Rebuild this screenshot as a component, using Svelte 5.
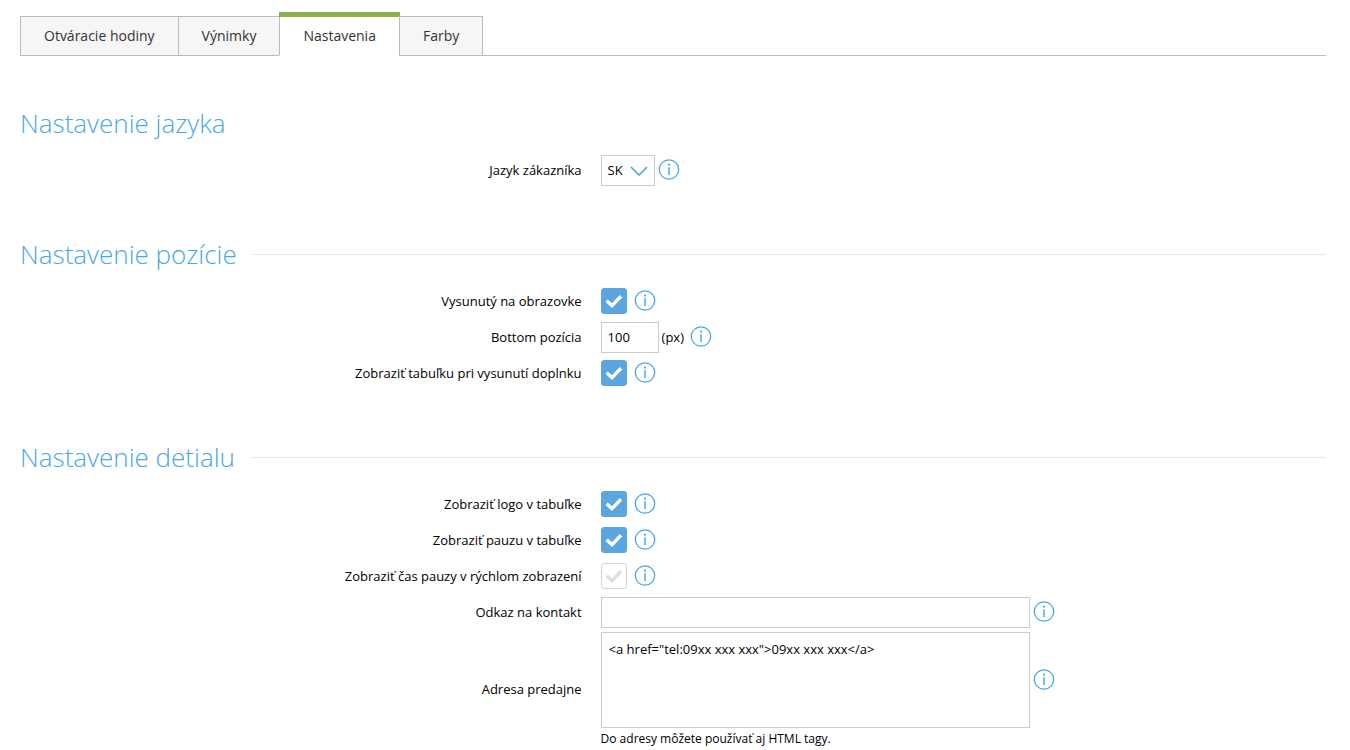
<script>
  let tabs = ["Otváracie hodiny", "Výnimky", "Nastavenia", "Farby"];
  let activeTab = "Nastavenia";

  let language = "SK";
  let bottom = "100";
  let contact = "";
  let address = '<a href="tel:09xx xxx xxx">09xx xxx xxx</a>';

  let position = {
    opened: true,
    showTable: true,
  };

  let detail = [
    { id: "logo", label: "Zobraziť logo v tabuľke", checked: true },
    { id: "pause", label: "Zobraziť pauzu v tabuľke", checked: true },
    {
      id: "pause-time",
      label: "Zobraziť čas pauzy v rýchlom zobrazení",
      checked: false,
    },
  ];
</script>

{#snippet info()}
  <button type="button" class="info" aria-label="Info">
    <svg viewBox="0 0 22 22" width="22" height="22" fill="none">
      <circle cx="11" cy="10.5" r="9.7" stroke="currentColor" stroke-width="1.3" />
      <circle cx="11" cy="5.7" r="1.1" fill="currentColor" />
      <path d="M11 8.3V15.9" stroke="currentColor" stroke-width="1.5" />
    </svg>
  </button>
{/snippet}

{#snippet tick()}
  <svg class="tick" viewBox="0 0 26 26" width="26" height="26" fill="none">
    <path d="M5.6 12.8L11 17.6L20 8.2" stroke="currentColor" stroke-width="3.4" />
  </svg>
{/snippet}

<nav class="tabs">
  {#each tabs as tab}
    <button
      type="button"
      class="tab"
      class:active={tab === activeTab}
      onclick={() => (activeTab = tab)}>{tab}</button
    >
  {/each}
</nav>

<form>
  <section>
    <h2>Nastavenie jazyka</h2>
    <div class="row">
      <label for="language">Jazyk zákazníka</label>
      <div class="field">
        <div class="select">
          <select id="language" bind:value={language}>
            <option>SK</option>
            <option>CZ</option>
            <option>EN</option>
          </select>
          <svg viewBox="0 0 18 10" width="18" height="10" fill="none">
            <path d="M1 1L9 9L17 1" stroke="currentColor" stroke-width="1.5" />
          </svg>
        </div>
        {@render info()}
      </div>
    </div>
  </section>

  <section>
    <h2 class="line">Nastavenie pozície</h2>
    <div class="row">
      <label for="opened">Vysunutý na obrazovke</label>
      <div class="field wide">
        <span class="check">
          <input id="opened" type="checkbox" bind:checked={position.opened} />
          {@render tick()}
        </span>
        {@render info()}
      </div>
    </div>
    <div class="row">
      <label for="bottom">Bottom pozícia</label>
      <div class="field">
        <input id="bottom" class="short" type="text" bind:value={bottom} />
        <span class="unit">(px)</span>
        {@render info()}
      </div>
    </div>
    <div class="row">
      <label for="show-table">Zobraziť tabuľku pri vysunutí doplnku</label>
      <div class="field wide">
        <span class="check">
          <input id="show-table" type="checkbox" bind:checked={position.showTable} />
          {@render tick()}
        </span>
        {@render info()}
      </div>
    </div>
  </section>

  <section>
    <h2 class="line">Nastavenie detialu</h2>
    {#each detail as item}
      <div class="row">
        <label for={item.id}>{item.label}</label>
        <div class="field wide">
          <span class="check">
            <input id={item.id} type="checkbox" bind:checked={item.checked} />
            {@render tick()}
          </span>
          {@render info()}
        </div>
      </div>
    {/each}
    <div class="row">
      <label for="contact">Odkaz na kontakt</label>
      <div class="field">
        <input id="contact" class="long" type="text" bind:value={contact} />
        {@render info()}
      </div>
    </div>
    <div class="row">
      <label for="address">Adresa predajne</label>
      <div class="stack">
        <div class="field">
          <textarea id="address" class="long" bind:value={address}></textarea>
          {@render info()}
        </div>
        <p class="note">Do adresy môžete používať aj HTML tagy.</p>
      </div>
    </div>
  </section>
</form>

<style>
  :global(body) {
    background: #fff;
    color: #000;
    font-family: "Open Sans", "Noto Sans", sans-serif;
    font-size: 13px;
  }

  .tabs {
    display: flex;
    margin: 16px 24px 0 20px;
    border-bottom: 1px solid #bbb;
  }

  .tab {
    position: relative;
    height: 40px;
    margin: 0 -1px -1px 0;
    padding: 0 23px 2px;
    border: 1px solid #bbb;
    background: #f6f6f6;
    color: #333;
    font: inherit;
    font-size: 14px;
    cursor: pointer;
  }

  .tab.active {
    border-bottom-color: #fff;
    background: #fff;
  }

  .tab.active::before {
    content: "";
    position: absolute;
    top: -5px;
    left: -1px;
    right: -1px;
    height: 5px;
    background: #8db14a;
  }

  form {
    padding: 50px 24px 0 20px;
  }

  section {
    margin-bottom: 49px;
  }

  section:last-child {
    margin-bottom: 0;
  }

  h2 {
    display: flex;
    align-items: center;
    gap: 16px;
    margin: 0 0 11px;
    color: #4aa8e8;
    font-size: 26px;
    font-weight: 300;
    line-height: 35px;
  }

  h2.line::after {
    content: "";
    flex: 1;
    height: 1px;
    background: #e5e5e5;
  }

  .row {
    display: grid;
    grid-template-columns: 43% 1fr;
    column-gap: 19px;
    align-items: center;
    min-height: 36px;
  }

  label {
    text-align: right;
  }

  .field {
    display: flex;
    align-items: center;
    gap: 3px;
  }

  .field.wide {
    gap: 7px;
  }

  input[type="text"],
  textarea,
  select {
    box-sizing: border-box;
    height: 31px;
    margin: 0;
    padding: 0 6px;
    border: 1px solid #ccc;
    border-radius: 0;
    background: #fff;
    color: #000;
    font: inherit;
    outline: none;
  }

  textarea {
    display: block;
    height: 96px;
    padding: 7px;
    resize: none;
  }

  .short {
    width: 58px;
  }

  .long {
    width: 429px;
  }

  .unit {
    margin-right: 3px;
  }

  .select {
    position: relative;
    display: flex;
  }

  select {
    width: 54px;
    appearance: none;
  }

  .select svg {
    position: absolute;
    top: 11px;
    right: 7px;
    color: #3d9fe3;
    pointer-events: none;
  }

  .check {
    position: relative;
    display: flex;
  }

  input[type="checkbox"] {
    box-sizing: border-box;
    width: 26px;
    height: 26px;
    margin: 0;
    border: 1px solid #d4d4d4;
    border-radius: 3px;
    background: #fff;
    appearance: none;
    cursor: pointer;
  }

  input[type="checkbox"]:checked {
    border-color: #5ba5e0;
    background: #5ba5e0;
  }

  .tick {
    position: absolute;
    top: 0;
    left: 0;
    color: #ddd;
    pointer-events: none;
  }

  input:checked + .tick {
    color: #fff;
  }

  .info {
    display: flex;
    padding: 0;
    border: 0;
    background: none;
    color: #48a9ea;
    cursor: pointer;
  }

  .stack {
    padding-top: 2px;
  }

  .note {
    margin: 2px 0 0;
    font-size: 12px;
    line-height: 18px;
  }
</style>
